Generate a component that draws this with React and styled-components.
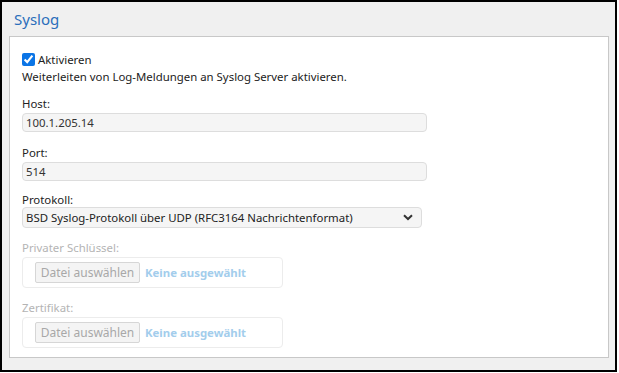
import React from 'react';
import styled, { createGlobalStyle } from 'styled-components';

const GlobalStyle = createGlobalStyle`
  html, body {
    margin: 0;
    padding: 0;
    background: #fff;
  }
  body {
    font-family: "Segoe UI", "Noto Sans", "Open Sans", sans-serif;
    font-size: 11.4px;
    color: #222;
  }
`;

const Frame = styled.div`
  box-sizing: border-box;
  width: 617px;
  height: 372px;
  border: 2px solid #000;
  background: #f0f0f0;
  display: flex;
  flex-direction: column;
  padding: 0 6px 12px 7px;
`;

const Title = styled.h2`
  margin: 0;
  height: 34px;
  display: flex;
  align-items: center;
  padding-left: 5px;
  font-weight: 400;
  font-size: 15px;
  color: #2a6ebb;
`;

const Panel = styled.div`
  flex: 1;
  background: #fff;
  border: 1px solid #c8c8c8;
  padding: 14px 12px 0;
  display: flex;
  flex-direction: column;
`;

const CheckRow = styled.label`
  display: flex;
  align-items: center;
  gap: 3px;
  line-height: 17px;
  height: 17px;
`;

const Check = styled.input`
  margin: 0;
  width: 13px;
  height: 13px;
  accent-color: #0b75e6;
`;

const Hint = styled.div`
  line-height: 17px;
`;

const Field = styled.div`
  margin-top: ${(p) => p.$top}px;
  display: flex;
  flex-direction: column;
`;

const Label = styled.div`
  line-height: 16px;
  color: ${(p) => (p.$disabled ? '#b4b4b4' : '#222')};
  margin-bottom: ${(p) => (p.$gap === undefined ? 1 : p.$gap)}px;
`;

const TextInput = styled.input`
  box-sizing: border-box;
  width: 405px;
  height: 19px;
  margin: 0;
  padding: 0 3px;
  font: inherit;
  color: #333;
  background: #f5f5f5;
  border: 1px solid #ddd;
  border-radius: 4px;
  outline: none;
`;

const SelectBox = styled.div`
  box-sizing: border-box;
  width: 400px;
  height: 21px;
  padding: 0 8px 0 3px;
  background: #f5f5f5;
  border: 1px solid #ddd;
  border-radius: 4px;
  display: flex;
  align-items: center;
  justify-content: space-between;
  color: #222;
`;

const FileBox = styled.div`
  box-sizing: border-box;
  width: 261px;
  height: 31px;
  border: 1px solid #ececec;
  border-radius: 4px;
  padding: 0 0 0 12px;
  display: flex;
  align-items: center;
  gap: 5px;
`;

const FileButton = styled.button`
  box-sizing: border-box;
  height: 21px;
  width: 105px;
  padding: 0;
  font: inherit;
  font-size: 12px;
  color: #a8a8a8;
  background: #f4f4f4;
  border: 1px solid #d6d6d6;
  border-radius: 2px;
`;

const NoFile = styled.span`
  color: #a3cdec;
  font-weight: 700;
`;

const Chevron = () => (
  <svg width="10" height="7" viewBox="0 0 10 7">
    <path d="M1 1.2 L5 5 L9 1.2" fill="none" stroke="#333" strokeWidth="2" />
  </svg>
);

const FileField = ({ label, top }) => (
  <Field $top={top}>
    <Label $disabled>{label}</Label>
    <FileBox>
      <FileButton disabled>Datei auswählen</FileButton>
      <NoFile>Keine ausgewählt</NoFile>
    </FileBox>
  </Field>
);

export default function App() {
  return (
    <>
      <GlobalStyle />
      <Frame>
        <Title>Syslog</Title>
        <Panel>
          <CheckRow>
            <Check type="checkbox" defaultChecked />
            Aktivieren
          </CheckRow>
          <Hint>Weiterleiten von Log-Meldungen an Syslog Server aktivieren.</Hint>
          <Field $top={11}>
            <Label>Host:</Label>
            <TextInput defaultValue="100.1.205.14" />
          </Field>
          <Field $top={13}>
            <Label>Port:</Label>
            <TextInput defaultValue="514" />
          </Field>
          <Field $top={11}>
            <Label $gap={-1}>Protokoll:</Label>
            <SelectBox>
              <span>BSD Syslog-Protokoll über UDP (RFC3164 Nachrichtenformat)</span>
              <Chevron />
            </SelectBox>
          </Field>
          <FileField label="Privater Schlüssel:" top={12} />
          <FileField label="Zertifikat:" top={12} />
        </Panel>
      </Frame>
    </>
  );
}
